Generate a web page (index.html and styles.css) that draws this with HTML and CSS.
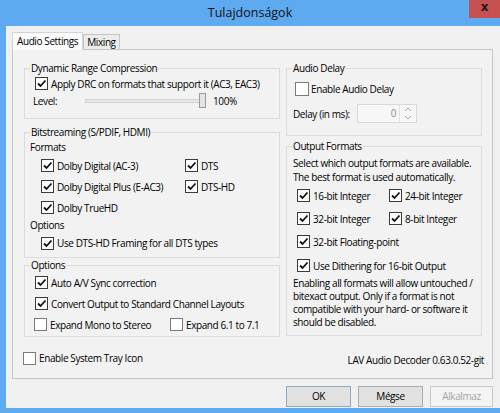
FILE: index.html
```html
<!DOCTYPE html>
<html lang="hu">
<head>
    <meta charset="UTF-8">
    <title>Tulajdonságok</title>
    <link rel="stylesheet" href="styles.css">
</head>
<body>
    <div class="window">
        <div class="titlebar">
            <span></span>
            <span class="title">Tulajdonságok</span>
            <span class="close">x</span>
        </div>

        <div class="client">
            <div class="tabs">
                <span class="tab active">Audio Settings</span>
                <span class="tab">Mixing</span>
            </div>

            <div class="panel">
                <div class="col">
                    <fieldset class="group drc">
                        <legend>Dynamic Range Compression</legend>
                        <div class="row ind5">
                            <span class="cb on"><svg viewBox="0 0 11 11"><path d="M2 5.5 L4.5 8 L9.5 2.5"/></svg></span>
                            Apply DRC on formats that support it (AC3, EAC3)
                        </div>
                        <div class="row ind3">
                            <span class="lvl">Level:</span>
                            <span class="slider"><span class="track"></span><span class="thumb"></span></span>
                            <span>100%</span>
                        </div>
                    </fieldset>

                    <fieldset class="group bits">
                        <legend>Bitstreaming (S/PDIF, HDMI)</legend>
                        <div class="sub">Formats</div>
                        <div class="row ind11">
                            <span class="cell w144"><span class="cb on"><svg viewBox="0 0 11 11"><path d="M2 5.5 L4.5 8 L9.5 2.5"/></svg></span>Dolby Digital (AC-3)</span>
                            <span class="cell"><span class="cb on"><svg viewBox="0 0 11 11"><path d="M2 5.5 L4.5 8 L9.5 2.5"/></svg></span>DTS</span>
                        </div>
                        <div class="row ind11">
                            <span class="cell w144"><span class="cb on"><svg viewBox="0 0 11 11"><path d="M2 5.5 L4.5 8 L9.5 2.5"/></svg></span>Dolby Digital Plus (E-AC3)</span>
                            <span class="cell"><span class="cb on"><svg viewBox="0 0 11 11"><path d="M2 5.5 L4.5 8 L9.5 2.5"/></svg></span>DTS-HD</span>
                        </div>
                        <div class="row ind11">
                            <span class="cb on"><svg viewBox="0 0 11 11"><path d="M2 5.5 L4.5 8 L9.5 2.5"/></svg></span>Dolby TrueHD
                        </div>
                        <div class="sub opt">Options</div>
                        <div class="row ind11 last">
                            <span class="cb on"><svg viewBox="0 0 11 11"><path d="M2 5.5 L4.5 8 L9.5 2.5"/></svg></span>Use DTS-HD Framing for all DTS types
                        </div>
                    </fieldset>

                    <fieldset class="group opts">
                        <legend>Options</legend>
                        <div class="row ind5">
                            <span class="cb on"><svg viewBox="0 0 11 11"><path d="M2 5.5 L4.5 8 L9.5 2.5"/></svg></span>Auto A/V Sync correction
                        </div>
                        <div class="row ind5">
                            <span class="cb on"><svg viewBox="0 0 11 11"><path d="M2 5.5 L4.5 8 L9.5 2.5"/></svg></span>Convert Output to Standard Channel Layouts
                        </div>
                        <div class="row ind4">
                            <span class="cell w136"><span class="cb"></span>Expand Mono to Stereo</span>
                            <span class="cell"><span class="cb"></span>Expand 6.1 to 7.1</span>
                        </div>
                    </fieldset>

                    <div class="row tray">
                        <span class="cb"></span>Enable System Tray Icon
                    </div>
                </div>

                <div class="col">
                    <fieldset class="group delay">
                        <legend>Audio Delay</legend>
                        <div class="row ind3 big">
                            <span class="cb"></span>Enable Audio Delay
                        </div>
                        <div class="row ind1 spinrow">
                            <span class="dim">Delay (in ms):</span>
                            <span class="spin">
                                <span class="val">0</span>
                                <span class="arrows">
                                    <svg viewBox="0 0 16 17"><path d="M5 6 L8 3 L11 6 M5 11 L8 14 L11 11"/></svg>
                                </span>
                            </span>
                        </div>
                    </fieldset>

                    <fieldset class="group outfmt">
                        <legend>Output Formats</legend>
                        <p class="desc">Select which output formats are available.<br>The best format is used automatically.</p>
                        <div class="row ind5 r23">
                            <span class="cell w92"><span class="cb on"><svg viewBox="0 0 11 11"><path d="M2 5.5 L4.5 8 L9.5 2.5"/></svg></span>16-bit Integer</span>
                            <span class="cell"><span class="cb on"><svg viewBox="0 0 11 11"><path d="M2 5.5 L4.5 8 L9.5 2.5"/></svg></span>24-bit Integer</span>
                        </div>
                        <div class="row ind5 r23">
                            <span class="cell w92"><span class="cb on"><svg viewBox="0 0 11 11"><path d="M2 5.5 L4.5 8 L9.5 2.5"/></svg></span>32-bit Integer</span>
                            <span class="cell"><span class="cb on"><svg viewBox="0 0 11 11"><path d="M2 5.5 L4.5 8 L9.5 2.5"/></svg></span>8-bit Integer</span>
                        </div>
                        <div class="row ind5 r23">
                            <span class="cb on"><svg viewBox="0 0 11 11"><path d="M2 5.5 L4.5 8 L9.5 2.5"/></svg></span>32-bit Floating-point
                        </div>
                        <div class="row ind5 r25">
                            <span class="cb on"><svg viewBox="0 0 11 11"><path d="M2 5.5 L4.5 8 L9.5 2.5"/></svg></span>Use Dithering for 16-bit Output
                        </div>
                        <p class="note">Enabling all formats will allow untouched /<br>bitexact output. Only if a format is not<br>compatible with your hard- or software it<br>should be disabled.</p>
                    </fieldset>

                    <div class="version">LAV Audio Decoder 0.63.0.52-git</div>
                </div>
            </div>

            <div class="buttons">
                <span class="btn default">OK</span>
                <span class="btn">Mégse</span>
                <span class="btn disabled">Alkalmaz</span>
            </div>
        </div>
    </div>
</body>
</html>
```

FILE: styles.css
```css
body {
    margin: 0;
    background-color: #5eaaf0;
    font-family: 'Open Sans', 'Noto Sans', sans-serif;
    font-size: 10px;
    letter-spacing: -0.4px;
    color: #000;
}
.window {
    width: 500px;
    height: 413px;
    overflow: hidden;
}
.titlebar {
    height: 26px;
    display: grid;
    grid-template-columns: 1fr auto 1fr;
    align-items: start;
}
.title {
    font-size: 12.5px;
    letter-spacing: 0;
    line-height: 26px;
    color: #111;
}
.close {
    justify-self: end;
    width: 31px;
    height: 18px;
    background-color: #c75050;
    color: #1a1a1a;
    font-family: 'DejaVu Sans', sans-serif;
    font-weight: bold;
    font-size: 12px;
    letter-spacing: 0;
    line-height: 15px;
    text-align: center;
}

.client {
    margin-left: 6px;
    height: 382px;
    background-color: #f0f0f0;
    padding: 6px 7px 0 6px;
    box-sizing: border-box;
}
.tabs {
    display: flex;
    align-items: flex-end;
    height: 17px;
    position: relative;
    z-index: 1;
}
.tab {
    height: 14px;
    line-height: 14px;
    padding: 0 3px;
    border: 1px solid #c4c4c4;
    border-bottom: none;
    background-color: #ececec;
}
.tab.active {
    height: 17px;
    line-height: 17px;
    padding: 0 4px;
    background-color: #fbfbfb;
    border-color: #d4d4d4;
    margin-bottom: -1px;
}
.panel {
    height: 330px;
    box-sizing: border-box;
    border: 1px solid #c6c6c6;
    background-color: #f2f2f2;
    padding: 11px 11px 0 11px;
    display: grid;
    grid-template-columns: 256px 196px;
    column-gap: 6px;
    align-items: start;
}
.col {
    display: flex;
    flex-direction: column;
}

.group {
    margin: 0;
    padding: 0 5px;
    border: 1px solid #dcdcdc;
    min-width: 0;
}
.group legend {
    padding: 0 1px;
    line-height: 14px;
}
.row {
    display: flex;
    align-items: center;
    height: 21px;
    white-space: nowrap;
}
.cell {
    display: flex;
    align-items: center;
}
.w144 { width: 144px; }
.w136 { width: 136px; }
.w92 { width: 92px; }
.ind1 { padding-left: 1px; }
.ind3 { padding-left: 3px; }
.ind4 { padding-left: 4px; }
.ind5 { padding-left: 5px; }
.ind11 { padding-left: 11px; }

.cb {
    width: 11px;
    height: 11px;
    border: 1px solid #7a7a7a;
    background-color: #fff;
    margin-right: 3px;
    flex: none;
    display: inline-flex;
}
.cb.on {
    border-color: #3a3a3a;
}
.cb svg {
    width: 11px;
    height: 11px;
    fill: none;
    stroke: #111;
    stroke-width: 1.8;
}

/* Dynamic range compression */
.drc { padding-bottom: 9px; }
.drc .row { height: 17px; }
.lvl { width: 52px; }
.slider {
    position: relative;
    width: 122px;
    height: 15px;
    margin-right: 6px;
    display: flex;
    align-items: center;
}
.track {
    width: 115px;
    height: 2px;
    background-color: #e6e6e6;
    border: 1px solid #d3d3d3;
}
.thumb {
    position: absolute;
    left: 114px;
    top: 0;
    width: 5px;
    height: 13px;
    background-color: #e4e4e4;
    border: 1px solid #9a9a9a;
}

/* Bitstreaming */
.bits {
    margin-top: 6px;
    padding-bottom: 4px;
}
.sub {
    height: 16px;
    line-height: 16px;
}
.sub.opt {
    height: 15px;
    line-height: 15px;
}
.bits .last { height: 20px; }

.opts { padding-bottom: 1px; }
.tray {
    margin-top: 11px;
    margin-left: -1px;
    height: 20px;
}

/* Right column */
.delay { padding-bottom: 11px; }
.delay .big { margin-top: 3px; height: 22px; }
.delay .big .cb { width: 12px; height: 12px; margin-right: 2px; }
.spinrow { margin-top: 3px; }
.dim { width: 64px; }
.spin {
    display: flex;
    width: 60px;
    height: 19px;
    box-sizing: border-box;
    border: 1px solid #d9d9d9;
    background-color: #f7f7f7;
    color: #8a8a8a;
}
.val {
    flex: 1;
    text-align: right;
    line-height: 17px;
    padding-right: 3px;
}
.arrows {
    width: 16px;
    border-left: 1px solid #e0e0e0;
    display: flex;
}
.arrows svg {
    width: 16px;
    height: 17px;
    fill: none;
    stroke: #a8a8a8;
    stroke-width: 1;
}

.outfmt {
    margin-top: 3px;
    padding-bottom: 6px;
}
.desc {
    margin: 3px 0 0 1px;
    line-height: 14px;
    white-space: nowrap;
}
.r23 { height: 23px; }
.r25 { height: 25px; }
.note {
    margin: -1px 0 0 1px;
    line-height: 13px;
    white-space: nowrap;
}
.version {
    margin-top: 16px;
    margin-right: -2px;
    height: 16px;
    line-height: 16px;
    text-align: right;
}

/* Dialog buttons */
.buttons {
    display: flex;
    justify-content: flex-end;
    gap: 7px;
    margin-top: 7px;
}
.btn {
    width: 63px;
    height: 19px;
    line-height: 19px;
    text-align: center;
    background-color: #e1e1e1;
    border: 1px solid #adadad;
}
.btn.default {
    border-color: #8fa9c4;
}
.btn.disabled {
    width: 61px;
    background-color: #f4f4f4;
    border-color: #c9c9c9;
    color: #a3a3a3;
}
```
